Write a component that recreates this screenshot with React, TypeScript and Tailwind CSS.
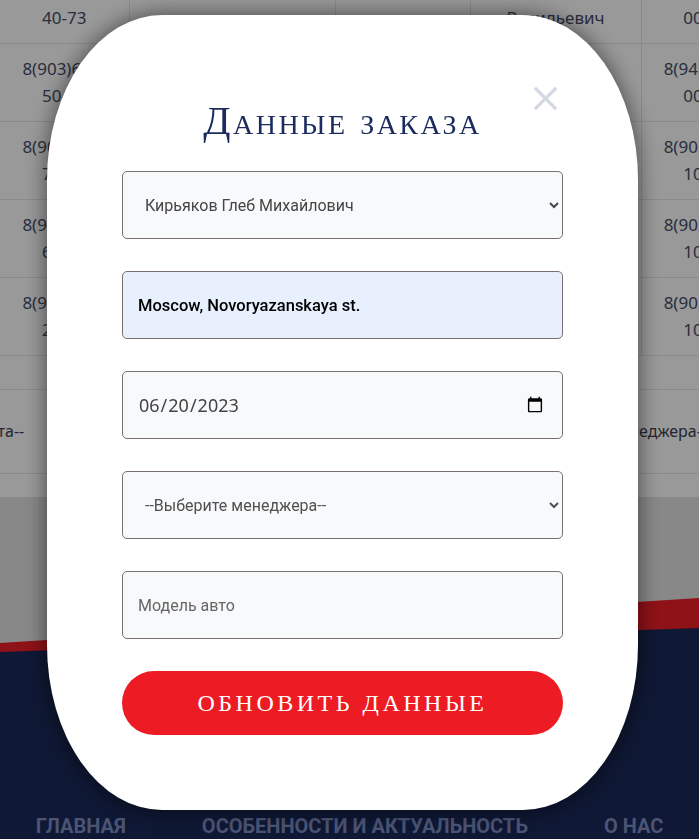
const rows = [
  { c1: ['8(903)612-', '40-73'], c2: [], c3: [], c4: ['Иван', 'Васильевич'], c5: ['8(945)110-', '00-12'] },
  { c1: ['8(903)612-', '50-73'], c2: ['Кирьяков Глеб'], c3: ['Toyota'], c4: ['Сергей', 'Андреевич'], c5: ['8(945)110-', '00-14'] },
  { c1: ['8(903)612-', '70-11'], c2: ['Смирнов Олег'], c3: ['Kia Rio'], c4: ['Олег', 'Игоревич'], c5: ['8(903)413-', '10-45'] },
  { c1: ['8(903)612-', '60-21'], c2: ['Орлов Павел'], c3: ['Mazda 6'], c4: ['Павел', 'Петрович'], c5: ['8(903)413-', '10-46'] },
  { c1: ['8(903)612-', '20-32'], c2: ['Белова Анна'], c3: ['Skoda'], c4: ['Анна', 'Сергеевна'], c5: ['8(903)413-', '10-47'] },
]

function Cell({ lines }: { lines: string[] }) {
  return (
    <td className="border-r border-[#e6e6e6] p-0 text-center align-middle">
      {lines.map((l, i) => (
        <div key={i}>{l}</div>
      ))}
    </td>
  )
}

export default function App() {
  return (
    <div className="relative h-[839px] w-full overflow-hidden bg-white font-['Noto_Sans',sans-serif]">
      {/* page behind the modal */}
      <div className="-mt-[35px]">
        <table className="w-[770px] table-fixed border-collapse text-[17px] leading-[27px] text-[#454d68]">
          <colgroup>
            <col className="w-[129px]" />
            <col className="w-[206px]" />
            <col className="w-[135px]" />
            <col className="w-[171px]" />
            <col className="w-[129px]" />
          </colgroup>
          <tbody>
            {rows.map((r, i) => (
              <tr key={i} className="h-[78px] border-b border-[#e6e6e6]">
                <Cell lines={r.c1} />
                <Cell lines={r.c2} />
                <Cell lines={r.c3} />
                <Cell lines={r.c4} />
                <Cell lines={r.c5} />
              </tr>
            ))}
          </tbody>
        </table>
      </div>
      <div className="h-[34px] border-b border-[#e6e6e6]" />
      <div className="flex h-[84px] items-center border-b border-[#e6e6e6] text-[16px] text-[#3a3f4f]">
        <span className="ml-[-140px] w-[168px] shrink-0">--Выберите клиента--</span>
        <span className="ml-[489px] shrink-0">--Выберите менеджера--</span>
      </div>
      <div className="h-[23px] bg-white" />
      <div className="relative h-[342px] bg-[#e3e3e3]">
        <svg className="absolute inset-0 h-full w-full" viewBox="0 0 699 342" preserveAspectRatio="none">
          <polygon points="0,146 699,101 699,342 0,342" fill="#ee1e28" />
          <polygon points="0,155 699,131 699,342 0,342" fill="#192857" />
        </svg>
        <nav className="absolute bottom-[1px] left-0 right-0 flex justify-center gap-[76px] font-['Roboto',sans-serif] text-[20px] font-bold leading-[24px] text-[#7d8cc3]">
          <span>ГЛАВНАЯ</span>
          <span>ОСОБЕННОСТИ И АКТУАЛЬНОСТЬ</span>
          <span>О НАС</span>
        </nav>
      </div>

      {/* overlay + modal */}
      <div className="fixed inset-0 bg-black/40">
        <div className="absolute left-[47px] top-[15px] flex h-[795px] w-[591px] flex-col rounded-[115px/165px] bg-white px-[75px] pt-[80px] shadow-[0_0_22px_rgba(0,0,0,0.55)]">
          <button className="absolute left-[487px] top-[72px] h-[23px] w-[23px]" aria-label="close">
            <svg viewBox="0 0 23 23" className="h-[23px] w-[23px]">
              <path d="M2 2L21 21M21 2L2 21" stroke="#d3d8e3" strokeWidth="3.2" strokeLinecap="square" />
            </svg>
          </button>
          <h2 className="mb-[24px] h-[52px] text-center font-['Liberation_Serif',serif] text-[40px] leading-[52px] tracking-[2.5px] text-[#1b2b5e] [font-variant:small-caps]">
            Данные заказа
          </h2>
          <form className="flex flex-col gap-[32px] font-['Roboto',sans-serif] text-[16px]">
            <select className="h-[68px] w-full rounded-[5px] border border-[#7a6f6f] bg-[#f8f9fb] pl-[18px] pr-[10px] text-[#454545]">
              <option>Кирьяков Глеб Михайлович</option>
            </select>
            <input
              type="text"
              defaultValue="Moscow, Novoryazanskaya st."
              className="h-[68px] w-full rounded-[5px] border border-[#7a6f6f] bg-[#e8f0fe] px-[15px] text-[16.5px] font-medium text-black outline-none"
            />
            <input
              type="date"
              defaultValue="2023-06-20"
              className="h-[68px] w-full rounded-[5px] border border-[#7a6f6f] bg-[#f8f9fb] pl-[15px] pr-[16px] font-['Noto_Sans',sans-serif] text-[18px] text-[#444]"
            />
            <select className="h-[68px] w-full rounded-[5px] border border-[#7a6f6f] bg-[#f8f9fb] pl-[18px] pr-[10px] text-[#505050]">
              <option>--Выберите менеджера--</option>
            </select>
            <input
              type="text"
              placeholder="Модель авто"
              className="h-[68px] w-full rounded-[5px] border border-[#7a6f6f] bg-[#f8f9fb] px-[15px] placeholder:text-[#666]"
            />
            <button
              type="button"
              className="h-[64px] w-full rounded-full bg-[#ed1c24] font-['Liberation_Serif',serif] text-[24px] tracking-[3.5px] text-white"
            >
              ОБНОВИТЬ ДАННЫЕ
            </button>
          </form>
        </div>
      </div>
    </div>
  )
}
